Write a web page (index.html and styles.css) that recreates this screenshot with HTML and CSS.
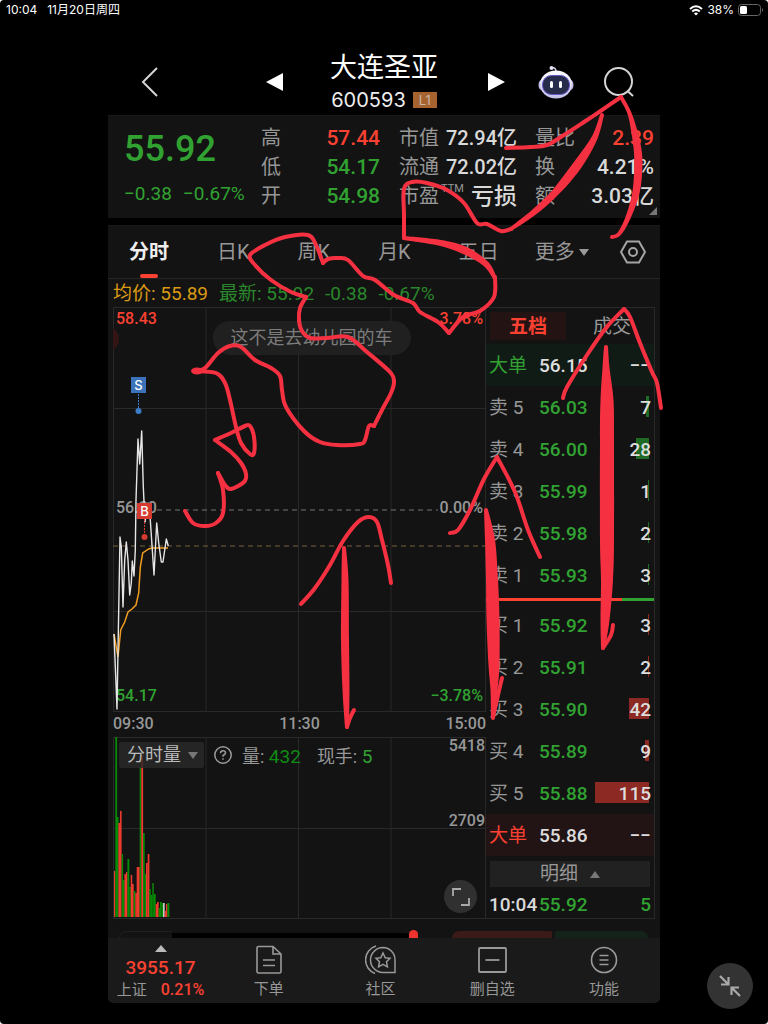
FILE: index.html
```html
<!DOCTYPE html>
<html lang="zh-CN">
<head>
<meta charset="utf-8">
<meta name="viewport" content="width=device-width, initial-scale=1">
<title>大连圣亚 600593</title>
<link rel="stylesheet" href="styles.css">
<script src="script.js" defer></script>
</head>
<body>
<div class="status">
  <span>10:04</span><span class="status-date">11月20日周四</span>
  <svg class="wifi" width="14" height="11" viewBox="0 0 14 11" fill="none" stroke="#fff" stroke-width="2"><path d="M1 4Q7 -1.4 13 4M3.2 6.6Q7 3.2 10.8 6.6"/><path d="M7 10.6L4.9 8.4Q7 6.8 9.1 8.4Z" fill="#fff" stroke="none"/></svg>
  <span class="status-pct">38%</span>
  <svg width="26" height="12" viewBox="0 0 26 12"><rect x=".5" y=".5" width="22" height="11" rx="3" fill="none" stroke="#666"/><rect x="2" y="2" width="7" height="8" rx="1.5" fill="#fff"/><path d="M24 4q2 2 0 4z" fill="#777"/></svg>
</div>

<main class="app">
  <header class="head">
    <button class="icon-btn back" aria-label="返回"><svg width="18" height="32" viewBox="0 0 18 32" fill="none" stroke="#d5d5d5" stroke-width="2"><path d="M16 2L2 16L16 30"/></svg></button>
    <button class="icon-btn prev" aria-label="上一只"><svg width="18" height="20" viewBox="0 0 18 20"><path d="M0 10L17 1V19Z" fill="#fff"/></svg></button>
    <div class="title">
      <h1>大连圣亚</h1>
      <p>600593<span class="badge">L1</span></p>
    </div>
    <button class="icon-btn next" aria-label="下一只"><svg width="18" height="20" viewBox="0 0 18 20"><path d="M17 10L0 1V19Z" fill="#fff"/></svg></button>
    <button class="icon-btn robot" aria-label="助手"><svg width="36" height="34" viewBox="0 0 36 34">
      <defs><linearGradient id="rb" x1="0" y1="0" x2="0" y2="1"><stop offset="0" stop-color="#fff"/><stop offset="1" stop-color="#c3c0e8"/></linearGradient></defs>
      <path d="M14 3Q18 2 18 7" fill="none" stroke="#d6d2f0" stroke-width="1.5"/><circle cx="13.500" cy="3" r="2" fill="#e6e3f5"/>
      <ellipse cx="3.500" cy="20" rx="3" ry="5" fill="#bdb8df"/><ellipse cx="32.500" cy="20" rx="3" ry="5" fill="#bdb8df"/>
      <ellipse cx="18" cy="19.500" rx="16" ry="14" fill="url(#rb)"/>
      <rect x="4.500" y="10.500" width="27" height="19" rx="9" fill="#262c49" stroke="#6157c9"/>
      <rect x="12" y="16" width="3" height="7" rx="1.500" fill="#fff"/><rect x="21" y="16" width="3" height="7" rx="1.500" fill="#fff"/></svg></button>
    <button class="icon-btn search" aria-label="搜索"><svg width="30" height="30" viewBox="0 0 30 30" fill="none" stroke="#d5d5d5" stroke-width="2"><circle cx="14.500" cy="14.500" r="13.500"/><path d="M23.500 24L29 29"/></svg></button>
  </header>

  <section class="quote">
    <div class="last">
      <strong>55.92</strong>
      <p><span>−0.38</span><span>−0.67%</span></p>
    </div>
    <dl class="stats s1">
      <dt>高</dt><dd class="red">57.44</dd>
      <dt>低</dt><dd class="green">54.17</dd>
      <dt>开</dt><dd class="green">54.98</dd>
    </dl>
    <dl class="stats s2">
      <dt>市值</dt><dd>72.94亿</dd>
      <dt>流通</dt><dd>72.02亿</dd>
      <dt>市盈<sup>TTM</sup></dt><dd class="big">亏损</dd>
    </dl>
    <dl class="stats s3">
      <dt>量比</dt><dd class="red">2.39</dd>
      <dt>换</dt><dd>4.21%</dd>
      <dt>额</dt><dd>3.03亿</dd>
    </dl>
    <i class="corner"></i>
  </section>

  <section class="panel">
    <nav class="tabs">
      <button class="tab on">分时</button>
      <button class="tab">日K</button>
      <button class="tab">周K</button>
      <button class="tab">月K</button>
      <button class="tab">五日</button>
      <button class="tab more">更多<i class="down"></i></button>
      <button class="tab setup" aria-label="设置"><svg width="26" height="24" viewBox="0 0 26 24" fill="none" stroke="#a5a5a5" stroke-width="2"><path d="M7 1.500H19L25 12L19 22.500H7L1 12Z"/><circle cx="13" cy="12" r="4"/></svg></button>
    </nav>
    <div class="info"><span class="avg">均价: 55.89</span><span class="new">最新: 55.92</span><span class="new">-0.38</span><span class="new">-0.67%</span></div>

    <div class="main">
      <div class="charts">
        <div class="plot">
          <svg class="fill" viewBox="0 0 373 405" preserveAspectRatio="none" fill="none">
            <path d="M.5 405V.5H373M93 0V405M185.500 0V405M278 0V405M0 101.500H373M0 304.500H373M0 404.500H373M372.500 0V405" stroke="#292929"/>
            <path d="M0 19A13 13 0 0 1 0 45" fill="#341515" transform="translate(-7 0)"/>
            <path d="M44 203H325" stroke="#777" stroke-dasharray="5 4"/>
            <path d="M0 239H373" stroke="#79603c" stroke-dasharray="5 4"/>
          </svg>
          <span class="lab top red">58.43</span><span class="lab top end red">3.78%</span>
          <span class="lab mid">56.30</span><span class="lab mid end">0.00%</span>
          <span class="lab low green">54.17</span><span class="lab low end green">−3.78%</span>
          <span class="bubble">这不是去幼儿园的车</span>
          <svg class="fill" viewBox="0 0 373 405" preserveAspectRatio="none" fill="none">
            <path d="M1 327L5 350L7.700 323L11.700 315L15 305L19 302L23 298L25.700 286L27.300 260L29.700 246L35.700 242L39 241H55" stroke="#ef9c20" stroke-width="1.500"/>
            <path d="M1 327L4 402L5 343L7 230L8.300 240L10 300L11.700 253L13.300 235L15 253L16.700 288L18.300 276L19.300 254L21 269L22.300 243L23 193L25 132L26.700 157L28.700 124L30.300 180L32 215L35 196L37.300 213L41 268L43.700 216L45.700 236L48.300 255L50 255L53.300 232L55.300 239" stroke="#e6e6e6" stroke-width="1.400" stroke-linejoin="round"/>
            <path d="M25.500 87V101" stroke="#3c7cc8" stroke-dasharray="2 1"/><circle cx="25.500" cy="104" r="3" fill="#3c7cc8"/>
            <path d="M31.500 212V228" stroke="#d53b30" stroke-dasharray="2 1"/><circle cx="31.500" cy="230" r="3" fill="#d53b30"/>
          </svg>
          <span class="mark sell">S</span><span class="mark buy">B</span>
        </div>
        <div class="times"><span>09:30</span><span>11:30</span><span>15:00</span></div>
        <div class="volume">
          <svg class="fill" viewBox="0 0 373 182" preserveAspectRatio="none" fill="none">
            <path d="M.5 182V.5H373M93 0V182M185.500 0V182M278 0V182M0 91.500H373M0 181.500H373M372.500 0V182" stroke="#292929"/>
            <g id="bars"></g>
          </svg>
          <div class="vol-head">
            <button class="vol-btn">分时量<i class="down"></i></button>
            <svg width="18" height="18" viewBox="0 0 18 18" fill="none" stroke="#999" stroke-width="1.500"><circle cx="9" cy="9" r="8.200"/><path d="M6.500 7.200Q6.500 4.800 9 4.800Q11.500 4.800 11.500 7Q11.500 8.300 9 9.500V10.800M9 12.200V13.800"/></svg>
            <span class="vol-a">量: <b>432</b></span><span>现手: <b class="green">5</b></span>
          </div>
          <span class="lab vtop end">5418</span><span class="lab vmid end">2709</span>
          <button class="expand" aria-label="全屏"><svg width="18" height="18" viewBox="0 0 18 18" fill="none" stroke="#aaa" stroke-width="1.800"><path d="M1 8V1H9M17 10V17H9"/></svg></button>
        </div>
      </div>

      <div class="book">
        <div class="book-tabs"><button class="on">五档</button><button>成交</button></div>
        <table>
          <tbody>
            <tr class="bigsell"><th>大单</th><td>56.15</td><td>−−</td></tr>
            <tr><th>卖 5</th><td>56.03</td><td><i style="width:3px"></i><span>7</span></td></tr>
            <tr><th>卖 4</th><td>56.00</td><td><i style="width:13px"></i><span>28</span></td></tr>
            <tr><th>卖 3</th><td>55.99</td><td><i style="width:1px"></i><span>1</span></td></tr>
            <tr><th>卖 2</th><td>55.98</td><td><i style="width:1px"></i><span>2</span></td></tr>
            <tr><th>卖 1</th><td>55.93</td><td><i style="width:1px"></i><span>3</span></td></tr>
          </tbody>
        </table>
        <div class="ratio"><i></i></div>
        <table class="buys">
          <tbody>
            <tr><th>买 1</th><td>55.92</td><td><i style="width:1px"></i><span>3</span></td></tr>
            <tr><th>买 2</th><td>55.91</td><td><i style="width:1px"></i><span>2</span></td></tr>
            <tr><th>买 3</th><td>55.90</td><td><i style="width:20px"></i><span>42</span></td></tr>
            <tr><th>买 4</th><td>55.89</td><td><i style="width:4px"></i><span>9</span></td></tr>
            <tr><th>买 5</th><td>55.88</td><td><i style="width:54px"></i><span>115</span></td></tr>
            <tr class="bigbuy"><th>大单</th><td>55.86</td><td>−−</td></tr>
          </tbody>
        </table>
        <button class="detail">明细<i class="up"></i></button>
        <div class="tick"><span>10:04</span><span class="green">55.92</span><span class="green">5</span></div>
      </div>
    </div>
    <div class="strip"><i class="s-grey"></i><i class="s-black"></i><i class="s-red"></i><i class="s-green"></i></div>
  </section>

  <nav class="bottom">
    <a href="#" class="index"><i class="up"></i><strong>3955.17</strong><span>上证<b>0.21%</b></span></a>
    <a href="#"><svg width="28" height="30" viewBox="0 0 28 30" fill="none" stroke="#999" stroke-width="1.600"><path d="M2 3Q2 1.500 3.500 1.500H18L26 9V26.500Q26 28 24.500 28H3.500Q2 28 2 26.500ZM18 1.500V9H26M8 15H20M8 20.500H20"/></svg>下单</a>
    <a href="#"><svg width="32" height="30" viewBox="0 0 32 30" fill="none" stroke="#999" stroke-width="1.500"><path d="M18 2.500A12.300 12.300 0 1 0 18 27.500H30V15A12.300 12.300 0 0 0 18 2.500Z"/><path d="M11 1A14.500 14.500 0 0 0 10 28.500"/><path d="M18 8L20.200 12.700L25 13.300L21.500 16.700L22.400 21.800L18 19.400L13.600 21.800L14.500 16.700L11 13.300L15.800 12.700Z"/></svg>社区</a>
    <a href="#"><svg width="30" height="30" viewBox="0 0 30 30" fill="none" stroke="#999" stroke-width="1.800"><rect x="2" y="3" width="27" height="24" rx="1"/><path d="M8.500 15H22.500"/></svg>删自选</a>
    <a href="#"><svg width="30" height="30" viewBox="0 0 30 30" fill="none" stroke="#999" stroke-width="1.600"><circle cx="15" cy="15" r="12.500"/><path d="M10.500 10.500H19.500M10.500 15H19.500M10.500 19.500H19.500"/></svg>功能</a>
  </nav>
</main>

<button class="shrink" aria-label="退出全屏"><svg width="22" height="22" viewBox="0 0 22 22" fill="none" stroke="#aaa" stroke-width="2.200"><path d="M1 1L9 9M9.500 2V9.500H2M21 21L13 13M12.500 20V12.500H20"/></svg></button>
<svg class="ink" id="ink" viewBox="0 0 768 1024" preserveAspectRatio="none" aria-hidden="true"></svg>
</body>
</html>
```
FILE: styles.css
```css
* { box-sizing: border-box; }
html { background: #fff; }
body {
  margin: 0; min-height: 100vh; position: relative; overflow-x: hidden;
  background: #000; border-radius: 4px; color: #d9d9d9;
  font-family: Roboto, "Noto Sans CJK SC", sans-serif;
}
h1, p, dl, dd { margin: 0; }
button { background: none; border: 0; padding: 0; margin: 0; color: inherit; font: inherit; }
i { display: block; }
a { color: inherit; text-decoration: none; }
svg { display: block; }
.red { color: #fb4132; }
.green { color: #31a232; }

.status {
  display: flex; align-items: center; height: 20px; padding: 0 4px 0 6px;
  color: #fff; font: 400 12px/20px Inter, "Noto Sans CJK SC", sans-serif;
}
.status-date { margin-left: 10px; }
.wifi { margin-left: auto; }
.status-pct { margin: 0 4px; }

.app { margin: 0 108px; }
.head { display: flex; align-items: center; height: 95px; padding: 29px 26px 0; }
.icon-btn { flex: none; }
.prev { margin-left: auto; }
.title { margin: 0 50px 0 46px; white-space: nowrap; text-align: center; }
.title h1 { font-size: 27px; font-weight: 400; line-height: 36px; color: #fff; }
.title p {
  display: flex; align-items: center; justify-content: center; gap: 7px;
  font: 400 20px/28px Inter, sans-serif; color: #eee;
}
.badge { padding: 0 6px; font-size: 13px; line-height: 16px; background: #a6632f; color: #c8b6a8; }
.robot { margin-left: 32px; }
.search { margin-left: 30px; }

.quote {
  position: relative; display: flex; height: 103px; padding: 8px 6px 0 16px;
  background: #131313; border-top: 1px solid #191919; margin-bottom: 7px;
}
.last { color: #31a232; width: 137px; }
.last strong { display: block; font-size: 36px; font-weight: 500; line-height: 50px; }
.last p { display: flex; gap: 11px; font-size: 19px; line-height: 40px; }
.stats {
  display: grid; grid-template-columns: auto 1fr; grid-auto-rows: 29px;
  line-height: 29px; font-size: 20px; white-space: nowrap;
}
.stats dt { color: #979797; }
.stats dd { text-align: right; font-weight: 500; }
.s1 dd, .s3 dd { font-size: 21px; }
.stats .big { font-size: 23px; }
.stats sup { position: absolute; margin-left: 2px; font-size: 11px; line-height: 14px; }
.s1 { width: 119px; }
.s2 { width: 118px; margin-left: 19px; }
.s3 { flex: 1; margin-left: 18px; }
.corner {
  position: absolute; right: 3px; bottom: 3px;
  border: 4px solid; border-color: transparent #777 #777 transparent;
}

.panel { background: #131313; border-top: 1px solid #191919; }
.tabs {
  display: flex; gap: 48px; align-items: center;
  height: 53px; padding: 0 16px 0 21px; border-bottom: 1px solid #252525;
  font-size: 20px; color: #979797; white-space: nowrap;
}
.tab { position: relative; height: 52px; line-height: 52px; }
.tab.on { color: #eee; font-weight: 700; }
.tab.on::after {
  content: ""; position: absolute; left: 11px; bottom: 0;
  width: 18px; height: 4px; border-radius: 2px; background: #fb4132;
}
.more { display: flex; align-items: center; gap: 4px; margin-left: -12px; }
.setup { display: grid; place-items: center; margin-left: auto; }
.tab.setup { margin-left: -17px; }
.down { border: 5px solid transparent; border-top: 7px solid #999; border-bottom: 0; }
.up { border: 5px solid transparent; border-bottom: 7px solid #777; border-top: 0; }
.info { display: flex; gap: 11px; height: 28px; padding: 0 5px; font-size: 19px; line-height: 29px; white-space: nowrap; }
.avg { color: #da9a14; }
.new { color: #2a872b; }

.main { display: grid; grid-template-columns: 373fr 169fr; padding: 0 5px; }
.plot { position: relative; height: 405px; overflow: hidden; }
.fill { position: absolute; inset: 0; width: 100%; height: 100%; }
.lab { position: absolute; left: 3px; font-size: 16px; font-weight: 500; line-height: 20px; color: #979797; }
.lab.red { color: #fb4132; }
.lab.green { color: #31a232; }
.lab.end { left: auto; right: 3px; }
.top { top: 2px; }
.mid { top: 191px; }
.low { bottom: 6px; }
.lab.vtop { top: -1px; right: 1px; }
.lab.vmid { top: 74px; right: 1px; }
.bubble {
  position: absolute; left: 50%; top: 14px; transform: translateX(-44%);
  padding: 0 18px; border-radius: 17px; white-space: nowrap;
  background: #202020; color: #7c7c7c; font-size: 18px; line-height: 34px;
}
.mark {
  position: absolute; width: 15px; height: 16px; color: #fff; text-align: center;
  font: 500 13px/16px Inter, sans-serif;
}
.sell { left: 18px; top: 70px; background: #3b72b9; }
.buy { left: 24px; top: 196px; background: #d53b30; }
.times {
  display: flex; justify-content: space-between; height: 25px;
  font-size: 16px; font-weight: 500; line-height: 23px; color: #979797;
}
.volume { position: relative; height: 182px; }
.vol-head {
  position: relative; display: flex; align-items: center; height: 26px; margin: 0 6px;
  top: 5px; font-size: 18px; color: #979797; white-space: nowrap;
}
.vol-head svg { margin: 0 10px; }
.vol-head b { font-size: 19px; font-weight: 400; }
.vol-a { margin-right: 16px; }
.vol-a b { color: #108a14; }
.vol-btn {
  display: flex; align-items: center; gap: 7px; height: 26px; padding: 0 6px 0 8px;
  border-radius: 2px; background: rgba(42, 42, 42, .82); color: #bbb; line-height: 28px;
}
.vol-btn .down { border-top-color: #777; }
.expand {
  position: absolute; right: 9px; bottom: 6px; width: 33px; height: 33px;
  display: grid; place-items: center; border-radius: 50%; background: #303030;
}

.book { border: 1px solid #292929; border-left: 0; min-width: 0; }
.book-tabs { display: flex; justify-content: space-between; height: 36px; padding: 4px 4px 4px; }
.book-tabs button { width: 76px; font-size: 19px; line-height: 29px; color: #979797; }
.book-tabs .on { background: #231413; color: #fb4132; font-weight: 700; }
table { width: 100%; border-collapse: collapse; table-layout: fixed; font-size: 19px; line-height: 30px; }
tr { height: 42px; }
th, td { padding: 2px 0 0; font-weight: 500; text-align: left; white-space: nowrap; }
th { width: 53px; padding-left: 3px; font-weight: 400; color: #979797; }
td { color: #31a232; }
td:last-child { position: relative; padding-right: 3px; text-align: right; color: #ddd; }
td span { position: relative; }
td i { position: absolute; right: 5px; top: 10px; height: 21px; background: #1f6a24; }
.buys td i { background: #8c2923; }
.bigsell { background: #111b16; }
.bigsell th { color: #31a232; }
.bigbuy { background: #221414; }
.bigbuy th { color: #fb4132; }
.bigsell td, .bigbuy td { color: #ddd; }
.ratio { height: 8px; padding: 2px 0 3px; }
.ratio i { height: 3px; background: linear-gradient(90deg, #fb4132 81%, #31a232 81%); }
.detail {
  display: flex; align-items: center; justify-content: center; gap: 12px;
  width: calc(100% - 8px); height: 26px; margin: 5px 4px 0;
  background: #212121; color: #979797; font-size: 19px; line-height: 28px;
}
.tick {
  display: grid; grid-template-columns: 50px 1fr auto; padding: 5px 3px 0;
  font-size: 19px; font-weight: 500; line-height: 26px;
}

.strip { display: grid; grid-template-columns: 53px 1fr 100px 96px; height: 19px; padding: 12px 12px 0 11px; }
.s-grey { border: 1px solid #202020; border-width: 1px 0 0 1px; border-radius: 17px 0 0 0; }
.s-black { position: relative; margin: 2px 37px 0 0; background: #000; border-radius: 0 14px 0 0; }
.s-black::after {
  content: ""; position: absolute; right: -8px; top: -3px;
  width: 9px; height: 8px; border-radius: 5px 5px 0 0; background: #f0332f;
}
.s-red { background: #3a1b17; border-radius: 14px 3px 0 0; }
.s-green { margin-left: 3px; background: #13231a; border-radius: 3px 14px 0 0; }

.bottom {
  display: grid; grid-template-columns: 105px repeat(4, 1fr); height: 65px;
  background: #1a1a1a; border-radius: 0 0 5px 5px; margin-bottom: 21px;
}
.bottom a {
  display: flex; flex-direction: column; align-items: center; padding-top: 7px;
  font-size: 15px; line-height: 28px; color: #979797;
}
.bottom .index { line-height: 22px; }
.bottom .index .up { border-width: 0 6px 7px; border-bottom-color: #bbb; }
.index strong { margin-top: 5px; font-size: 19px; font-weight: 500; color: #fb4132; }
.index b { margin-left: 14px; font-size: 16px; font-weight: 500; color: #fb4132; }

.shrink {
  position: absolute; right: 15px; bottom: 15px; width: 46px; height: 46px;
  display: grid; place-items: center; border-radius: 50%; background: #333;
}
.ink { position: absolute; inset: 0; width: 100%; height: 100%; pointer-events: none; }
.back { margin-left: 7px; }
.s-black { margin-right: 42px; }
```
FILE: script.js
```js
const NS = 'http://www.w3.org/2000/svg';

function add(parent, tag, attrs) {
  const el = document.createElementNS(NS, tag);
  for (const key in attrs) el.setAttribute(key, attrs[key]);
  parent.appendChild(el);
}

// Volume bars: x, width, height, direction
const volumes = [
  [1, 1.4, 46, 'r'], [2.3, 1.8, 180, 'g'], [4, 1.5, 100, 'g'], [5.4, 1.7, 94, 'r'], [7, 1.6, 106, 'r'],
  [8.6, 1.5, 63, 'g'], [10, 1.5, 37, 'g'], [11.4, 1.7, 43, 'r'], [13, 1.5, 45, 'r'], [14.4, 1.9, 58, 'g'],
  [16.3, 1.5, 30, 'g'], [17.7, 1.5, 42, 'r'], [19, 1.7, 33, 'r'], [20.7, 1.7, 26, 'g'], [22.3, 1.6, 24, 'r'],
  [23.7, 3, 50, 'r'], [26.7, 1.7, 150, 'g'], [28.3, 1.8, 162, 'r'], [30, 1.7, 84, 'g'], [31.6, 1.5, 43, 'g'],
  [33, 1.7, 54, 'r'], [34.7, 1.7, 63, 'r'], [36.3, 1.5, 28, 'g'], [37.7, 1.7, 22, 'g'], [39.3, 1.5, 34, 'g'],
  [40.7, 2, 23, 'g'], [42.7, 1.5, 13, 'r'], [44, 1.7, 15, 'r'], [45.7, 1.5, 9, 'g'], [47, 1.7, 15, 'g'],
  [48.7, 1.4, 14, 'g'], [50, 1.7, 14, 'w'], [51.7, 1.4, 6, 'r'], [53, 1.5, 13, 'r'], [54.4, 2, 14, 'g']
];
const tone = { r: '#ef3b2d', g: '#078b07', w: '#c9c9c9' };
const bars = document.getElementById('bars');
volumes.forEach(([x, width, height, dir]) =>
  add(bars, 'rect', { x, y: 180 - height, width, height, fill: tone[dir] }));

// Smooth curve through a list of points
function curve(p) {
  let d = `M${p[0]}`;
  for (let i = 0; i < p.length - 1; i++) {
    const a = p[i - 1] || p[i], b = p[i], c = p[i + 1], e = p[i + 2] || c;
    d += `C${b[0] + (c[0] - a[0]) / 6} ${b[1] + (c[1] - a[1]) / 6} ${c[0] - (e[0] - b[0]) / 6} ${c[1] - (e[1] - b[1]) / 6} ${c}`;
  }
  return d;
}

// Outline of a stroke whose width varies from point to point: [x, y, width]
function ribbon(p) {
  const side = s => p.map((q, i) => {
    const a = p[i - 1] || q, b = p[i + 1] || q;
    const dx = b[0] - a[0], dy = b[1] - a[1], len = Math.hypot(dx, dy);
    return [q[0] - s * dy / len * q[2] / 2, q[1] + s * dx / len * q[2] / 2];
  });
  return curve(side(1)) + curve(side(-1).reverse()).replace('M', 'L') + 'Z';
}

const strokes = [
  [[506,148],[531,147],[547,145],[564,135],[584,122],[602,110],[621,97]],
  [[511,229],[501,231],[487,224],[477,223],[464,203],[447,190],[427,183],[412,182],[404,189],[404,215],[404,238]],
  [[495,277],[494,297],[480,311],[463,317],[449,333]],
  [[449,333],[438,322],[420,312],[413,303],[394,295],[375,280],[363,276],[348,260],[338,258],[328,259],[323,263]],
  [[323,263],[316,245],[308,235],[285,237],[265,245],[250,255],[255,265],[271,280],[291,292],[306,297]],
  [[306,297],[300,308],[299,320],[302,331],[310,338],[327,338],[348,337],[367,352],[390,372],[394,382],[391,393],[382,410],[374,426]],
  [[374,426],[369,426],[365,440],[360,444],[337,445],[320,442],[304,431],[286,407],[282,390],[280,376],[271,368],[255,360],[241,347],[230,346],[218,353],[205,368],[195,371]],
  [[195,371],[216,373],[225,383],[230,400],[236,427],[241,443],[250,454],[254,453],[254,437],[250,426],[245,426],[231,433],[215,440]],
  [[215,440],[231,452],[241,463],[246,474],[244,482],[231,489],[225,485],[218,473]],
  [[218,473],[223,490],[223,513],[216,523],[205,526],[193,523],[185,511]],
  [[301,604],[315,588],[330,565],[343,541],[358,522],[369,517],[377,522],[382,540],[388,565],[391,583]],
  [[347,727],[350,718],[354,710]],
  [[450,533],[458,530],[470,510],[484,479],[497,457]],
  [[497,457],[515,492],[528,530],[540,557]],
  [[563,398],[567,387],[587,355],[606,328],[624,309]],
  [[624,309],[630,317],[640,343],[652,372],[657,383],[661,408]],
  [[493,717],[498,695],[502,678]],
  [[603,648],[611,635],[613,625]]
];
const ribbons = [
  [[621,97,4],[629,112,4],[634,130,6],[638,153,8],[638,175,8],[635,197,7],[627,220,5],[619,234,4],[612,237,4]],
  [[602,115,4],[595,137,6],[581,160,9],[566,180,9],[551,197,7],[533,213,6],[511,229,4]],
  [[404,238,4],[441,243,6],[466,251,8],[486,264,6],[495,278,4]],
  [[344,548,4],[345,580,7],[345,640,8],[346,690,7],[347,727,4]],
  [[486,510,4],[490,540,10],[492,580,12],[493,620,13],[494,665,11],[494,690,7],[493,718,4]],
  [[606,347,4],[606,368,7],[607,400,13],[607,440,14],[607,540,14],[607,580,12],[605,620,9],[603,648,4]]
];
const red = '#f53141';
const ink = document.getElementById('ink');
ribbons.forEach(p => {
  add(ink, 'path', { d: ribbon(p), fill: red });
  [p[0], p[p.length - 1]].forEach(([cx, cy]) => add(ink, 'circle', { cx, cy, r: 2, fill: red }));
});
strokes.forEach(p => add(ink, 'path', {
  d: curve(p), fill: 'none', stroke: red, 'stroke-width': 4,
  'stroke-linecap': 'round', 'stroke-linejoin': 'round'
}));
add(ink, 'ellipse', { cx: 197, cy: 371, rx: 6, ry: 3.5, fill: red });
```
